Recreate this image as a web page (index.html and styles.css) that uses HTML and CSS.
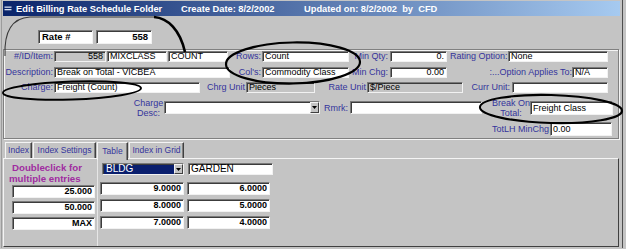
FILE: index.html
```html
<!DOCTYPE html>
<html>
<head>
<meta charset="utf-8">
<link rel="stylesheet" href="styles.css">
</head>
<body>
<div class="window">
  <div class="titlebar">
    <svg class="ticon" width="7" height="5" viewBox="0 0 7 5"><rect x="0" y="0.5" width="7" height="1.3" fill="#d8e0f0"/><rect x="0" y="3" width="7" height="1.3" fill="#d8e0f0"/></svg>
    <span class="t1">Edit Billing Rate Schedule Folder</span>
    <span class="t2">Create Date: 8/2/2002</span>
    <span class="t3">Updated on: 8/2/2002&nbsp; by&nbsp; CFD</span>
  </div>

  <div class="rate-row">
    <div class="fld rate-label">Rate #</div>
    <div class="fld rate-val">558</div>
  </div>

  <div class="frame">
    <div class="row r1">
      <span class="lb c-id">#/ID/Item:</span>
      <span class="fld dis num c-idv">558</span>
      <span class="fld c-mix">MIXCLASS</span>
      <span class="fld c-cnt">COUNT</span>
      <span class="lb c-rows">Rows:</span>
      <span class="fld c-rowsv">Count</span>
      <span class="lb c-min">Min Qty:</span>
      <span class="fld num c-minv">0.</span>
      <span class="lb c-rate">Rating Option:</span>
      <span class="fld c-ratev">None</span>
    </div>
    <div class="row r2">
      <span class="lb c-id">Description:</span>
      <span class="fld c-desc">Break on Total - VICBEA</span>
      <span class="lb c-cols">Col's:</span>
      <span class="fld c-rowsv">Commodity Class</span>
      <span class="lb c-min">Min Chg:</span>
      <span class="fld num c-minv">0.00</span>
      <span class="lb c-opt">:...Option Applies To:</span>
      <span class="fld c-optv">N/A</span>
    </div>
    <div class="row r3">
      <span class="lb c-id">Charge:</span>
      <span class="fld c-chg">Freight (Count)</span>
      <span class="lb c-cu">Chrg Unit</span>
      <span class="fld dis c-cuv">Pieces</span>
      <span class="lb c-ru">Rate Unit</span>
      <span class="fld dis c-ruv">$/Piece</span>
      <span class="lb c-cur">Curr Unit:</span>
      <span class="fld c-curv"></span>
    </div>
    <div class="row r4">
      <span class="lb2 c-cd">Charge<br>Desc:</span>
      <span class="fld sel c-cdv"><span class="arrow"><svg width="5" height="3" viewBox="0 0 5 3"><path d="M0 0H5L2.5 3Z" fill="#000"/></svg></span></span>
      <span class="lb c-rm">Rmrk:</span>
      <span class="fld c-rmv"></span>
      <span class="lb2 c-bo">Break On<br>Total:</span>
      <span class="fld c-bov">Freight Class</span>
    </div>
    <div class="row r5">
      <span class="lb c-tl">TotLH MinChg</span>
      <span class="fld c-tlv">0.00</span>
    </div>
  </div>

  <div class="tabs">
    <span class="tab tab-index">Index</span>
    <span class="tab tab-set">Index Settings</span>
    <span class="tab tab-table active">Table</span>
    <span class="tab tab-grid">Index in Grid</span>
  </div>

  <div class="panel">
    <div class="leftcol">
      <div class="hint">Doubleclick for<br>multiple entries</div>
      <div class="vals">
        <span class="fld big c-l">25.000</span>
        <span class="fld big c-l">50.000</span>
        <span class="fld big c-l">MAX</span>
      </div>
    </div>
    <div class="rightcol">
      <div class="hdr">
        <span class="fld sel bldg">BLDG<span class="arrow"><svg width="5" height="3" viewBox="0 0 5 3"><path d="M0 0H5L2.5 3Z" fill="#000"/></svg></span></span>
        <span class="fld garden">GARDEN</span>
      </div>
      <div class="grid">
        <span class="fld big g1">9.0000</span>
        <span class="fld big g2">6.0000</span>
        <span class="fld big g1">8.0000</span>
        <span class="fld big g2">5.0000</span>
        <span class="fld big g1">7.0000</span>
        <span class="fld big g2">4.0000</span>
      </div>
    </div>
  </div>
</div>

<svg class="marks" width="626" height="249" viewBox="0 0 626 249">
  <path d="M5 56 C4 32 11 18 30 17 L156 17" fill="none" stroke="#3a3a3a" stroke-width="1.1"/>
  <path d="M154 17 C168 18 180 30 185 52" fill="none" stroke="#000" stroke-width="2.6"/>
  <ellipse cx="293" cy="63" rx="67" ry="20.5" transform="rotate(-1 293 63)" fill="none" stroke="#000" stroke-width="2.2"/>
  <ellipse cx="72" cy="90.5" rx="69" ry="9" transform="rotate(-2 72 90.5)" fill="none" stroke="#000" stroke-width="2"/>
  <ellipse cx="551" cy="109" rx="71" ry="14" transform="rotate(1.5 551 109)" fill="none" stroke="#000" stroke-width="2.2"/>
</svg>
</body>
</html>
```

FILE: styles.css
```css
* { box-sizing: border-box; margin: 0; padding: 0; }
html, body { width: 626px; height: 249px; overflow: hidden; }
body {
  background: #c4c4c4;
  font-family: "Liberation Sans", Arial, sans-serif;
  position: relative;
}

.window {
  width: 622px;
  height: 248px;
  margin-left: 1px;
  border-left: 1px solid #9c9c9c;
  border-right: 1px solid #4e4e4e;
  padding: 1px 0 0 1px;
}

/* title bar */
.titlebar {
  width: 617px;
  height: 15px;
  background: linear-gradient(90deg, #0a246a 0%, #a6caf0 100%);
  display: flex;
  align-items: center;
  color: #fff;
  font-weight: bold;
  font-size: 9.3px;
  white-space: nowrap;
}
.ticon { margin-left: 1px; width: 8px; flex: none; }
.t1 { margin-left: 4px; width: 165px; flex: none; }
.t2 { width: 123px; flex: none; }
.t3 { flex: none; }

/* generic fields */
.fld {
  display: block;
  flex: none;
  background: #fff;
  border: 1px solid;
  border-color: #7a7a7a #f2f2f2 #f2f2f2 #7a7a7a;
  box-shadow: inset 1px 1px 0 #3c3c3c;
  font-size: 9px;
  color: #000;
  padding-left: 2px;
  white-space: nowrap;
  overflow: hidden;
  position: relative;
}
.fld.dis { background: #c4c4c4; }
.fld.num { text-align: right; padding-right: 2px; }

.lb, .lb2 {
  display: block;
  flex: none;
  color: #34349c;
  font-size: 9px;
  white-space: nowrap;
}
.lb { text-align: right; padding-right: 1px; }
.lb2 { text-align: center; line-height: 10px; }

/* rate row */
.rate-row {
  display: flex;
  padding-top: 14px;
  padding-left: 35px;
  gap: 3px;
}
.rate-row .fld {
  height: 14px;
  line-height: 12px;
  font-weight: bold;
  font-size: 9.5px;
}
.rate-label { width: 55px; padding-left: 3px; }
.rate-val { width: 56px; text-align: right; padding-right: 3px; }

/* frame */
.frame {
  margin-top: 5px;
  width: 616px;
  height: 90px;
  border: 1px solid #808080;
  box-shadow: inset 1px 1px 0 #f4f4f4, 1px 1px 0 #f4f4f4;
  padding-top: 1px;
}
.row { display: flex; align-items: center; }
.r1 { height: 11px; }
.r2 { height: 11px; margin-top: 5px; }
.r3 { height: 11px; margin-top: 4px; }
.r4 { height: 21px; margin-top: 4px; }
.r5 { height: 14px; margin-top: 4px; justify-content: flex-end; padding-right: 6px; }
.r1 .fld, .r2 .fld, .r3 .fld { height: 11px; line-height: 9px; }
.r1 .lb, .r2 .lb, .r3 .lb { line-height: 11px; }

.c-id { width: 50px; }
.c-idv { width: 52px; margin-right: 1px; }
.c-mix { width: 60px; margin-right: 1px; }
.c-cnt { width: 60px; }
.c-rows { width: 34px; }
.c-cols { width: 32px; }
.c-rowsv { width: 87px; }
.c-min { width: 41px; padding-right: 2px; }
.c-minv { width: 57px; }
.c-rate { width: 61px; text-align: left; padding-left: 3px; }
.c-ratev { width: 100px; }
.c-desc { width: 176px; }
.c-opt { width: 125px; padding-right: 0; }
.c-optv { width: 36px; }
.c-chg { width: 146px; }
.c-cu { width: 46px; }
.c-cuv { width: 69px; }
.c-ru { width: 52px; }
.c-ruv { width: 96px; }
.c-cur { width: 49px; padding-right: 2px; }
.c-curv { width: 96px; }

.c-cd { width: 31px; margin-left: 129px; }
.c-cdv { width: 156px; height: 13px; }
.c-rm { width: 30px; padding-right: 2px; }
.c-rmv { width: 132px; height: 13px; }
.c-bo { width: 48px; padding-left: 10px; }
.c-bov { width: 83px; height: 14px; line-height: 12px; }
.c-tl { padding-right: 1px; }
.c-tlv { width: 62px; height: 14px; line-height: 12px; }

/* select arrows */
.sel .arrow {
  position: absolute;
  right: 0;
  top: 0;
  bottom: 0;
  width: 9px;
  background: #c4c4c4;
  border: 1px solid;
  border-color: #f4f4f4 #404040 #404040 #f4f4f4;
  display: flex;
  align-items: center;
  justify-content: center;
}

/* tabs */
.tabs {
  display: flex;
  align-items: flex-end;
  height: 16px;
  margin-top: 3px;
  padding-left: 2px;
  position: relative;
  z-index: 1;
}
.tab {
  display: block;
  height: 16px;
  border-top: 1px solid #f4f4f4;
  border-left: 1px solid #f4f4f4;
  border-right: 1px solid #404040;
  box-shadow: inset -1px 0 0 #808080;
  color: #34349c;
  font-size: 8.5px;
  line-height: 15px;
  text-align: center;
  white-space: nowrap;
  margin-right: 1px;
}
.tab-index { width: 27px; }
.tab-set { width: 63px; }
.tab-table { width: 31px; }
.tab-grid { width: 55px; }
.tab.active {
  height: 18px;
  margin-bottom: -2px;
  background: #c4c4c4;
  line-height: 16px;
}

/* panel */
.panel {
  width: 616px;
  height: 89px;
  border-top: 1px solid #f4f4f4;
  border-left: 1px solid #f4f4f4;
  border-right: 1px solid #404040;
  border-bottom: 1px solid #404040;
  display: flex;
}
.leftcol {
  width: 94px;
  border-right: 1px solid #e6e6e6;
  flex: none;
}
.hint {
  color: #a02ca0;
  font-weight: bold;
  font-size: 9.7px;
  line-height: 11px;
  padding-top: 3px;
  padding-left: 5px;
  text-indent: 3px;
  height: 26px;
}
.vals {
  display: flex;
  flex-direction: column;
  gap: 3px;
  padding-left: 8px;
}
.big {
  height: 13px;
  line-height: 11px;
  font-size: 9px;
  font-weight: bold;
  text-align: right;
  padding-right: 2px;
}
.c-l { width: 83px; }

.rightcol { flex: none; }
.hdr {
  display: flex;
  gap: 4px;
  padding-top: 4px;
  padding-left: 4px;
}
.bldg {
  width: 82px;
  height: 12px;
  line-height: 10px;
  background: #0a1f6e;
  color: #fff;
  font-size: 10px;
  padding-left: 3px;
}
.garden {
  width: 85px;
  height: 12px;
  line-height: 10px;
  font-size: 10px;
  padding-left: 2px;
}
.grid {
  display: grid;
  grid-template-columns: 84px 83px;
  column-gap: 3px;
  row-gap: 4px;
  margin-top: 7px;
  padding-left: 2px;
}

/* annotation overlay */
.marks {
  position: absolute;
  left: 0;
  top: 0;
  pointer-events: none;
}
```
